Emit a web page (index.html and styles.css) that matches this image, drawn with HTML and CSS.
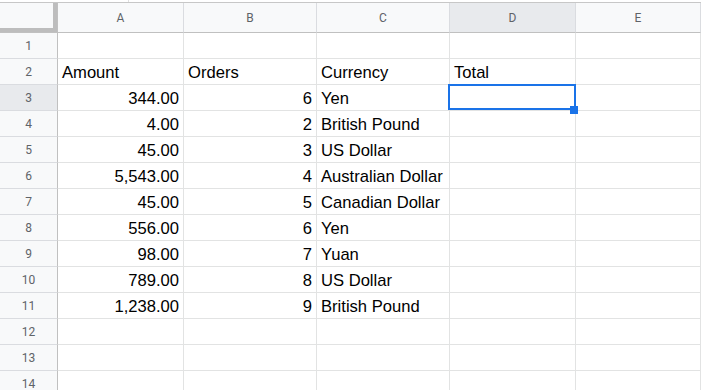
FILE: index.html
```html
<!DOCTYPE html>
<html lang="en">

<head>
    <meta charset="UTF-8">
    <title>Sheet</title>
    <link rel="stylesheet" href="styles.css">
</head>

<body>
    <div class="topbar"><span class="tick"></span></div>

    <div class="sheet">
        <div class="row head-row">
            <div class="corner"></div>
            <div class="col-head">A</div>
            <div class="col-head">B</div>
            <div class="col-head">C</div>
            <div class="col-head active">D</div>
            <div class="col-head">E</div>
        </div>

        <div class="row">
            <div class="row-head">1</div>
            <div class="cell"></div><div class="cell"></div><div class="cell"></div><div class="cell"></div><div class="cell"></div>
        </div>
        <div class="row">
            <div class="row-head">2</div>
            <div class="cell">Amount</div>
            <div class="cell">Orders</div>
            <div class="cell">Currency</div>
            <div class="cell">Total</div>
            <div class="cell"></div>
        </div>
        <div class="row">
            <div class="row-head active">3</div>
            <div class="cell num">344.00</div>
            <div class="cell num">6</div>
            <div class="cell">Yen</div>
            <div class="cell selected"><span class="sel-box"><span class="handle"></span></span></div>
            <div class="cell"></div>
        </div>
        <div class="row">
            <div class="row-head">4</div>
            <div class="cell num">4.00</div>
            <div class="cell num">2</div>
            <div class="cell">British Pound</div>
            <div class="cell"></div><div class="cell"></div>
        </div>
        <div class="row">
            <div class="row-head">5</div>
            <div class="cell num">45.00</div>
            <div class="cell num">3</div>
            <div class="cell">US Dollar</div>
            <div class="cell"></div><div class="cell"></div>
        </div>
        <div class="row">
            <div class="row-head">6</div>
            <div class="cell num">5,543.00</div>
            <div class="cell num">4</div>
            <div class="cell">Australian Dollar</div>
            <div class="cell"></div><div class="cell"></div>
        </div>
        <div class="row">
            <div class="row-head">7</div>
            <div class="cell num">45.00</div>
            <div class="cell num">5</div>
            <div class="cell">Canadian Dollar</div>
            <div class="cell"></div><div class="cell"></div>
        </div>
        <div class="row">
            <div class="row-head">8</div>
            <div class="cell num">556.00</div>
            <div class="cell num">6</div>
            <div class="cell">Yen</div>
            <div class="cell"></div><div class="cell"></div>
        </div>
        <div class="row">
            <div class="row-head">9</div>
            <div class="cell num">98.00</div>
            <div class="cell num">7</div>
            <div class="cell">Yuan</div>
            <div class="cell"></div><div class="cell"></div>
        </div>
        <div class="row">
            <div class="row-head">10</div>
            <div class="cell num">789.00</div>
            <div class="cell num">8</div>
            <div class="cell">US Dollar</div>
            <div class="cell"></div><div class="cell"></div>
        </div>
        <div class="row">
            <div class="row-head">11</div>
            <div class="cell num">1,238.00</div>
            <div class="cell num">9</div>
            <div class="cell">British Pound</div>
            <div class="cell"></div><div class="cell"></div>
        </div>
        <div class="row">
            <div class="row-head">12</div>
            <div class="cell"></div><div class="cell"></div><div class="cell"></div><div class="cell"></div><div class="cell"></div>
        </div>
        <div class="row">
            <div class="row-head">13</div>
            <div class="cell"></div><div class="cell"></div><div class="cell"></div><div class="cell"></div><div class="cell"></div>
        </div>
        <div class="row">
            <div class="row-head">14</div>
            <div class="cell"></div><div class="cell"></div><div class="cell"></div><div class="cell"></div><div class="cell"></div>
        </div>
    </div>
</body>

</html>
```

FILE: styles.css
```css
* {
    box-sizing: border-box;
}

html,
body {
    margin: 0;
    height: 100%;
    overflow: hidden;
    background: #fff;
}

body {
    font-family: "Liberation Sans", Arial, sans-serif;
    color: #000;
}

.topbar {
    height: 3px;
    border-bottom: 1px solid #c7c7c7;
    background: #fff;
    padding-left: 128px;
}

.tick {
    display: block;
    width: 1px;
    height: 2px;
    background: #e0e0e0;
}

.row {
    display: grid;
    grid-template-columns: 58px 126px 133px 133px 126px 1fr;
    height: 26px;
}

.head-row {
    height: 30px;
}

/* header cells */
.corner,
.col-head,
.row-head {
    background: #f8f9fa;
    color: #5f6368;
    font-family: Roboto, "Liberation Sans", Arial, sans-serif;
    font-size: 12px;
    display: flex;
    align-items: center;
    justify-content: center;
}

.corner {
    border-right: 1px solid #c0c0c0;
    border-bottom: 1px solid #c0c0c0;
    box-shadow: inset -4px -4px 0 #bdbdbd;
}

.col-head {
    border-right: 1px solid #dadce0;
    border-bottom: 1px solid #c0c0c0;
    padding-top: 1px;
}

.row-head {
    border-right: 1px solid #c0c0c0;
    border-bottom: 1px solid #dadce0;
}

.col-head.active,
.row-head.active {
    background: #e8eaed;
}

/* grid cells */
.cell {
    position: relative;
    border-right: 1px solid #e2e3e3;
    border-bottom: 1px solid #e2e3e3;
    font-size: 16.6px;
    line-height: 19px;
    padding: 0 4px 2px 4px;
    display: flex;
    align-items: flex-end;
    white-space: nowrap;
}

.cell.num {
    justify-content: flex-end;
}

.sel-box {
    position: absolute;
    z-index: 2;
    top: -1px;
    left: -2px;
    right: -1px;
    bottom: 0;
    border: 2px solid #1a73e8;
}

.handle {
    position: absolute;
    right: -4px;
    bottom: -6px;
    width: 8px;
    height: 8px;
    background: #1a73e8;
}
```
